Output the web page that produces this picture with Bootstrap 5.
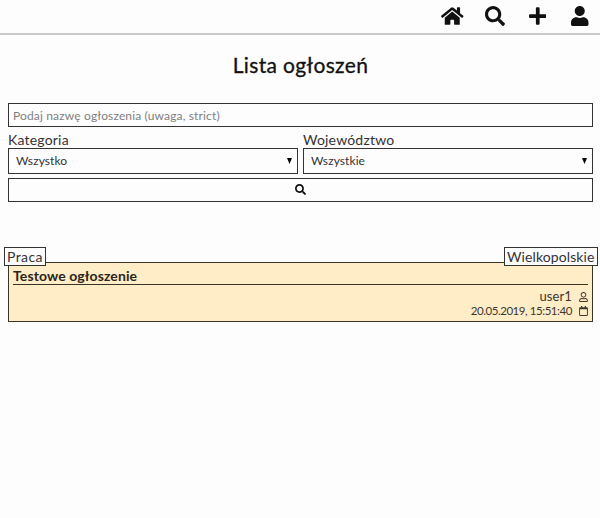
<!DOCTYPE html>
<html lang="pl">
<head>
<meta charset="utf-8">
<meta name="viewport" content="width=device-width, initial-scale=1">
<title>Lista ogłoszeń</title>
<link href="https://cdn.jsdelivr.net/npm/bootstrap@5.3.0/dist/css/bootstrap.min.css" rel="stylesheet">
<style>
body{font-family:Lato,"Open Sans",sans-serif;background:#fefdfe;color:#333;font-size:14px;line-height:17px;overflow:hidden}
.topbar{height:35px;border-bottom:2px solid #c9c8ca;gap:4.5px;padding:0 1px 1px 0}
.topbar a{width:38px;color:#111;line-height:0}
.topbar svg{height:20px}
svg{fill:currentColor}
h1{font-size:21px;line-height:26px;color:#111;margin:17px 0 25px;font-weight:400;letter-spacing:.35px;-webkit-text-stroke:.3px #111}
.page{padding:0 7px 0 8px}
.form-control,.form-select,.find{border:1px solid #333;border-radius:0;background-color:#fefdfe;color:#333}
.form-control{height:24px;padding:0 4px;font-size:12px;letter-spacing:.15px}
.form-control::placeholder{color:#808080}
.form-select{height:26px;padding:0 7px;font-size:12px;letter-spacing:.08px;line-height:24px;background-image:url("data:image/svg+xml,%3Csvg xmlns='http://www.w3.org/2000/svg' viewBox='0 0 5 6'%3E%3Cpath d='M0 0h5L2.500 6z'/%3E%3C/svg%3E");background-size:5px 6px;background-position:right 5px top 9px}
.filters{gap:5px;margin-top:5px}
label{font-size:14px;line-height:16px;height:16px;letter-spacing:.2px}
.find{height:24px;margin-top:4px;line-height:0;color:#111}
.find svg{width:11px;height:11px;position:relative;top:-1px}
.offer{margin-top:60px;height:60px;border:1px solid #3a3428;background:#ffedc8;padding:4px 4px 0}
.tag{top:-16px;height:19px;border:1px solid #333;background:#fefdfe;padding:0 2px;line-height:17px;font-size:14px;white-space:nowrap}
.tag-left{left:-5px;width:42px;letter-spacing:.4px}
.tag-right{right:-6px;width:94px;letter-spacing:.1px}
.offer h2{font-size:14px;line-height:17px;height:18px;margin:0 0 5px;border-bottom:1px solid #3a3428;color:#2a241a;font-weight:700;letter-spacing:.1px}
.meta{line-height:14px;height:14px;gap:7px;color:#3d372c}
.meta svg{width:9px;height:10px}
.author{font-size:13px;line-height:12px;letter-spacing:.1px;margin-top:-2px}
.date{font-size:11.5px;line-height:12px;letter-spacing:-.44px;margin-top:-1px}
</style>
</head>
<body>
<svg class="d-none"><symbol id="search" viewBox="0 0 512 512"><path d="M505 442.7L405.3 343c-4.5-4.5-10.6-7-17-7H372c27.6-35.3 44-79.7 44-128C416 93.1 322.9 0 208 0S0 93.1 0 208s93.1 208 208 208c48.3 0 92.7-16.4 128-44v16.3c0 6.4 2.5 12.5 7 17l99.7 99.7c9.4 9.4 24.6 9.4 33.9 0l28.3-28.3c9.4-9.4 9.4-24.6.1-34zM208 336c-70.7 0-128-57.2-128-128 0-70.7 57.2-128 128-128 70.7 0 128 57.2 128 128 0 70.7-57.2 128-128 128z"/></symbol></svg>
<nav class="topbar d-flex justify-content-end align-items-center">
<a href="#" class="text-center" aria-label="Start"><svg viewBox="0 0 576 512"><path d="M280.37 148.26L96 300.11V464a16 16 0 0 0 16 16l112.06-.29a16 16 0 0 0 15.92-16V368a16 16 0 0 1 16-16h64a16 16 0 0 1 16 16v95.64a16 16 0 0 0 16 16.05L464 480a16 16 0 0 0 16-16V300L295.67 148.26a12.19 12.19 0 0 0-15.3 0zM571.6 251.47L488 182.56V44.05a12 12 0 0 0-12-12h-56a12 12 0 0 0-12 12v72.61L318.47 43a48 48 0 0 0-61 0L4.34 251.47a12 12 0 0 0-1.6 16.9l25.5 31A12 12 0 0 0 45.15 301l235.22-193.74a12.19 12.19 0 0 1 15.3 0L530.9 301a12 12 0 0 0 16.9-1.6l25.5-31a12 12 0 0 0-1.7-16.93z"/></svg></a>
<a href="#" class="text-center" aria-label="Szukaj"><svg viewBox="0 0 512 512"><use href="#search"/></svg></a>
<a href="#" class="text-center" aria-label="Dodaj"><svg viewBox="0 0 448 512"><path d="M416 208H272V64c0-17.7-14.3-32-32-32h-32c-17.7 0-32 14.3-32 32v144H32c-17.7 0-32 14.3-32 32v32c0 17.7 14.3 32 32 32h144v144c0 17.7 14.3 32 32 32h32c17.7 0 32-14.3 32-32V304h144c17.7 0 32-14.3 32-32v-32c0-17.7-14.3-32-32-32z"/></svg></a>
<a href="#" class="text-center" aria-label="Konto"><svg viewBox="0 0 448 512"><path d="M224 256c70.7 0 128-57.3 128-128S294.7 0 224 0 96 57.3 96 128s57.3 128 128 128zm89.6 32h-16.7c-22.2 10.2-46.9 16-72.9 16s-50.6-5.8-72.9-16h-16.7C60.2 288 0 348.2 0 422.4V464c0 26.5 21.5 48 48 48h352c26.5 0 48-21.5 48-48v-41.6c0-74.2-60.2-134.4-134.4-134.4z"/></svg></a>
</nav>
<main class="page">
<h1 class="text-center">Lista ogłoszeń</h1>
<form>
<input class="form-control" type="text" placeholder="Podaj nazwę ogłoszenia (uwaga, strict)">
<div class="filters d-flex">
<div class="flex-fill w-50"><label class="d-block" for="cat">Kategoria</label><select id="cat" class="form-select"><option>Wszystko</option></select></div>
<div class="flex-fill w-50"><label class="d-block" for="reg">Województwo</label><select id="reg" class="form-select"><option>Wszystkie</option></select></div>
</div>
<button type="button" class="find w-100 p-0" aria-label="Szukaj"><svg viewBox="0 0 512 512"><use href="#search"/></svg></button>
</form>
<article class="offer position-relative">
<span class="tag tag-left position-absolute">Praca</span>
<span class="tag tag-right position-absolute">Wielkopolskie</span>
<h2>Testowe ogłoszenie</h2>
<div class="meta d-flex justify-content-end align-items-center"><span class="author">user1</span><svg viewBox="0 0 448 512"><path d="M313.600 304c-28.700 0-42.500 16-89.600 16-47.100 0-60.800-16-89.600-16C60.200 304 0 364.200 0 438.400V464c0 26.500 21.500 48 48 48h352c26.500 0 48-21.500 48-48v-25.600c0-74.200-60.200-134.400-134.400-134.400zM400 464H48v-25.600c0-47.600 38.800-86.400 86.400-86.400 14.600 0 38.300 16 89.600 16 51.700 0 74.900-16 89.600-16 47.600 0 86.400 38.800 86.400 86.400V464zM224 288c79.500 0 144-64.500 144-144S303.500 0 224 0 80 64.500 80 144s64.500 144 144 144zm0-240c52.900 0 96 43.100 96 96s-43.100 96-96 96-96-43.100-96-96 43.100-96 96-96z"/></svg></div>
<div class="meta d-flex justify-content-end align-items-center"><span class="date">20.05.2019, 15:51:40</span><svg viewBox="0 0 448 512"><path d="M400 64h-48V12c0-6.600-5.400-12-12-12h-40c-6.600 0-12 5.400-12 12v52H160V12c0-6.600-5.400-12-12-12h-40c-6.600 0-12 5.400-12 12v52H48C21.500 64 0 85.500 0 112v352c0 26.500 21.500 48 48 48h352c26.500 0 48-21.500 48-48V112c0-26.500-21.500-48-48-48zm-6 400H54c-3.300 0-6-2.700-6-6V160h352v298c0 3.300-2.700 6-6 6z"/></svg></div>
</article>
</main>
</body>
</html>
